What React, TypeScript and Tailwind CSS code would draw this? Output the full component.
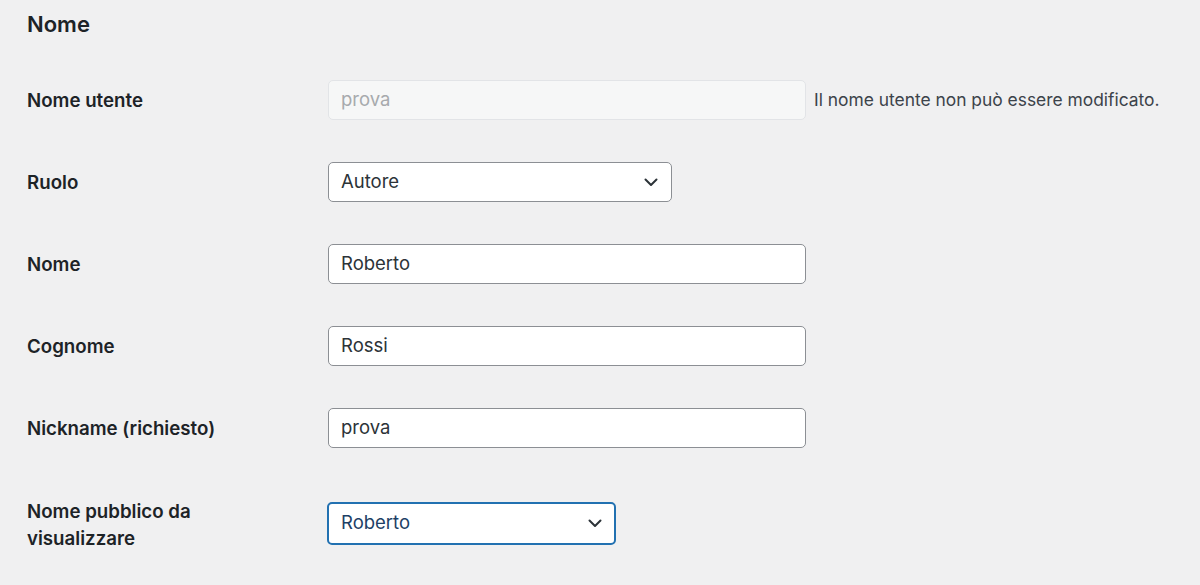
import React from 'react';

const Chevron = ({ color = '#2c3338' }: { color?: string }) => (
  <svg width="14" height="9" viewBox="0 0 14 9" fill="none" className="shrink-0">
    <path d="M1.5 1.5L7 7L12.5 1.5" stroke={color} strokeWidth="2" strokeLinecap="round" strokeLinejoin="round" />
  </svg>
);

const Label = ({ children }: { children: React.ReactNode }) => (
  <div className="w-[301px] shrink-0 text-[18.7px] font-semibold leading-[27px] text-[#1d2327]">{children}</div>
);

const TextField = ({ value }: { value: string }) => (
  <div className="w-[478px] h-[40px] flex items-center bg-white border border-[#8c8f94] rounded-[5px] px-[12px] text-[18.5px] text-[#2c3338]">
    {value}
  </div>
);

export default function App() {
  return (
    <div className="w-[1200px] h-[585px] bg-[#f0f0f1] pl-[27px] font-['Inter','Liberation_Sans',sans-serif] overflow-hidden">
      <div className="h-[59px] pt-[10px]">
        <h2 className="text-[22px] font-semibold leading-[28px] text-[#1d2327]">Nome</h2>
      </div>

      <div className="h-[82px] flex items-center">
        <Label>Nome utente</Label>
        <div className="w-[478px] h-[40px] flex items-center bg-[#f6f7f7] border border-[#e2e4e7] rounded-[5px] px-[12px] text-[18.5px] text-[#a7aaad]">
          prova
        </div>
        <span className="ml-[8px] text-[17.4px] text-[#3c434a]">Il nome utente non può essere modificato.</span>
      </div>

      <div className="h-[82px] flex items-center">
        <Label>Ruolo</Label>
        <div className="w-[344px] h-[40px] flex items-center justify-between bg-white border border-[#8c8f94] rounded-[5px] pl-[12px] pr-[13px] text-[18.5px] text-[#2c3338]">
          <span>Autore</span>
          <Chevron />
        </div>
      </div>

      <div className="h-[82px] flex items-center">
        <Label>Nome</Label>
        <TextField value="Roberto" />
      </div>

      <div className="h-[82px] flex items-center">
        <Label>Cognome</Label>
        <TextField value="Rossi" />
      </div>

      <div className="h-[82px] flex items-center">
        <Label>Nickname (richiesto)</Label>
        <TextField value="prova" />
      </div>

      <div className="h-[96px] mt-[6px] flex items-center">
        <div className="pt-[4px]">
          <Label>
            Nome pubblico da
            <br />
            visualizzare
          </Label>
        </div>
        <div className="-ml-[1px] w-[289px] h-[43px] flex items-center justify-between bg-white border-2 border-[#2271b1] rounded-[5px] pl-[12px] pr-[12px] text-[18.5px] text-[#1d3f66]">
          <span>Roberto</span>
          <Chevron />
        </div>
      </div>
    </div>
  );
}
